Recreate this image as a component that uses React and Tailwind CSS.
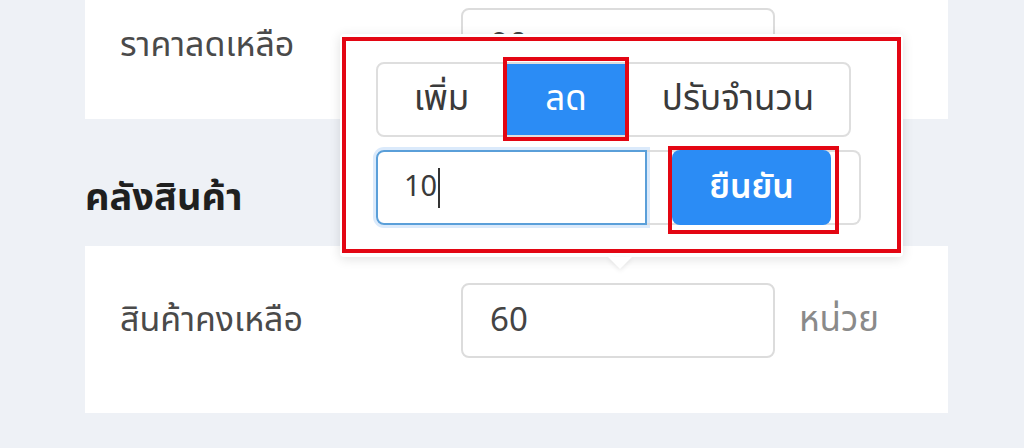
const FONT = { fontFamily: '"Noto Sans Thai", "Noto Sans", "Liberation Sans", sans-serif' };

function Field({ label, value, suffix }) {
  return (
    <div className="flex items-center">
      <div className="w-[376px] pl-[35px] text-[34px] leading-[40px] text-[#4a4a4a]">{label}</div>
      <div className="w-[314px] h-[75px] border-2 border-[#dcdcdc] rounded-[8px] bg-white flex items-center px-[27px] text-[33px] leading-[40px] text-[#444]">
        {value}
      </div>
      {suffix && <div className="ml-[24px] text-[35px] leading-[40px] text-[#8a8a8a]">{suffix}</div>}
    </div>
  );
}

export default function App() {
  return (
    <div className="relative w-[1024px] h-[448px] overflow-hidden bg-[#eef1f6]" style={FONT}>
      <div className="pl-[85px] w-[948px]">
        <div className="bg-white pt-[8px] pb-[36px]">
          <Field label="ราคาลดเหลือ" value="90" />
        </div>

        <h2 className="mt-[58px] h-[69px] text-[38px] font-bold text-[#1f1f1f] leading-[44px]">คลังสินค้า</h2>

        <div className="bg-white pt-[37px] pb-[55px]">
          <Field label="สินค้าคงเหลือ" value="60" suffix="หน่วย" />
        </div>
      </div>

      {/* popover */}
      <div className="absolute left-[340px] top-[34px] w-[563px] h-[223px] bg-white rounded-[4px] shadow-[0_2px_12px_rgba(0,0,0,0.12)] pt-[28px] pl-[36px]">
        <div className="flex w-[475px] h-[75px] border-2 border-[#dedede] rounded-[8px] overflow-hidden text-[35px] leading-[40px]">
          <div className="w-[127px] flex items-center justify-center text-[#3a3a3a]">เพิ่ม</div>
          <div className="w-[122px] flex items-center justify-center bg-[#2b8cf5] text-white">ลด</div>
          <div className="flex-1 flex items-center justify-center text-[#3a3a3a]">ปรับจำนวน</div>
        </div>
        <div className="mt-[13px] flex h-[75px]">
          <div className="w-[271px] h-full border-2 border-[#5a9fd9] rounded-l-[8px] shadow-[0_0_0_3px_#dbeafb] flex items-center px-[26px] text-[29px] text-[#3a3a3a]">
            10<span className="ml-[1px] w-[2px] h-[40px] bg-[#333]" />
          </div>
          <div className="w-[214px] h-full border-2 border-l-0 border-[#dedede] rounded-r-[8px] pl-[25px] flex items-center">
            <button className="w-[159px] h-[75px] rounded-[8px] bg-[#2b8cf5] text-white text-[34px] leading-[40px] font-semibold">ยืนยัน</button>
          </div>
        </div>
        <div className="absolute left-[268px] -bottom-[12px] w-0 h-0 border-l-[12px] border-r-[12px] border-t-[12px] border-l-transparent border-r-transparent border-t-white drop-shadow-[0_2px_2px_rgba(0,0,0,0.08)]" />
      </div>

      {/* annotation boxes */}
      <div className="absolute left-[342px] top-[37px] w-[559px] h-[216px] border-4 border-[#e30613]" />
      <div className="absolute left-[503px] top-[57px] w-[126px] h-[84px] border-4 border-[#e30613]" />
      <div className="absolute left-[668px] top-[146px] w-[171px] h-[88px] border-4 border-[#e30613]" />
    </div>
  );
}
